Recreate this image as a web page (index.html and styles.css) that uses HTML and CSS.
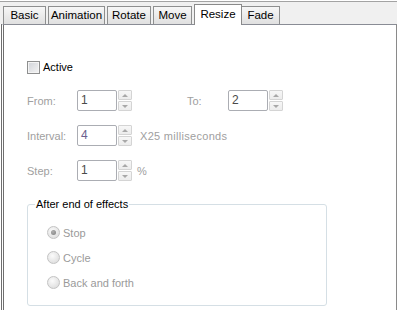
FILE: index.html
```html
<!DOCTYPE html>
<html>
<head>
<meta charset="utf-8">
<link rel="stylesheet" href="styles.css">
</head>
<body>
<div class="window">
  <div class="tabstrip">
    <div class="tab tab-basic">Basic</div>
    <div class="tab tab-animation">Animation</div>
    <div class="tab tab-rotate">Rotate</div>
    <div class="tab tab-move">Move</div>
    <div class="tab tab-resize active">Resize</div>
    <div class="tab tab-fade">Fade</div>
  </div>
  <div class="panel">
    <div class="check-row">
      <span class="checkbox"></span>
      <span class="check-label">Active</span>
    </div>

    <div class="field-row">
      <span class="lbl">From:</span>
      <div class="spin">
        <span class="spin-input">1</span>
        <span class="spin-btns"><span class="spin-btn up"></span><span class="spin-btn down"></span></span>
      </div>
      <span class="lbl lbl-to">To:</span>
      <div class="spin">
        <span class="spin-input">2</span>
        <span class="spin-btns"><span class="spin-btn up"></span><span class="spin-btn down"></span></span>
      </div>
    </div>

    <div class="field-row">
      <span class="lbl">Interval:</span>
      <div class="spin">
        <span class="spin-input val-purple">4</span>
        <span class="spin-btns"><span class="spin-btn up"></span><span class="spin-btn down"></span></span>
      </div>
      <span class="unit unit-ms">X25 milliseconds</span>
    </div>

    <div class="field-row">
      <span class="lbl">Step:</span>
      <div class="spin">
        <span class="spin-input">1</span>
        <span class="spin-btns"><span class="spin-btn up"></span><span class="spin-btn down"></span></span>
      </div>
      <span class="unit unit-pct">%</span>
    </div>

    <fieldset class="group">
      <legend>After end of effects</legend>
      <div class="radio-row"><span class="radio checked"></span><span>Stop</span></div>
      <div class="radio-row"><span class="radio"></span><span>Cycle</span></div>
      <div class="radio-row"><span class="radio"></span><span>Back and forth</span></div>
    </fieldset>
  </div>
</div>
</body>
</html>
```

FILE: styles.css
```css
html, body {
  margin: 0;
  padding: 0;
  background: #ffffff;
}

body {
  font-family: "Liberation Sans", Arial, sans-serif;
  font-size: 11px;
  color: #000;
  width: 397px;
  height: 310px;
  overflow: hidden;
}

.window {
  display: flex;
  flex-direction: column;
  height: 310px;
}

.tabstrip {
  height: 22px;
  border-top: 1px solid #a3a3a3;
  margin-top: 1px;
  background: #f0f0f0;
  display: flex;
  align-items: flex-end;
  padding-left: 3px;
  gap: 2px;
}

.tab {
  box-sizing: border-box;
  height: 18px;
  border: 1px solid #8e8f8f;
  border-bottom: none;
  background: linear-gradient(#f7f7f7, #ebebeb 50%, #e0e0e0);
  text-align: center;
  line-height: 17px;
  font-size: 11.5px;
  color: #000;
}

.tab-basic { width: 43px; }
.tab-animation { width: 57px; }
.tab-rotate { width: 44px; }
.tab-move { width: 39px; }
.tab-resize { width: 48px; }
.tab-fade { width: 39px; margin-left: -3px; }

.tab.active {
  height: 21px;
  margin-bottom: -1px;
  background: #ffffff;
  position: relative;
  z-index: 2;
  line-height: 18px;
  border-color: #8a8a8a;
}

.panel {
  flex: 1;
  margin-left: 1px;
  border-top: 1px solid #898c95;
  border-left: 3px double #6f6f6f;
  border-right: 1px solid #8a8a8a;
  background: #fff;
  padding: 36px 0 0 23px;
  position: relative;
  z-index: 1;
}

.check-row {
  display: flex;
  align-items: center;
  height: 13px;
  gap: 3px;
}

.checkbox {
  box-sizing: border-box;
  width: 13px;
  height: 13px;
  border: 1px solid #8e8f8f;
  background: linear-gradient(135deg, #d0d3d8, #f4f4f4);
  box-shadow: inset 0 0 0 1px #f4f4f4;
}

.check-label {
  line-height: 13px;
}

.field-row {
  display: flex;
  align-items: center;
  height: 21px;
  margin-top: 14px;
  color: #a0a0a0;
}

.check-row + .field-row {
  margin-top: 16px;
}

.lbl {
  width: 50px;
}

.lbl-to {
  width: 41px;
  margin-left: 55px;
}

.spin {
  display: flex;
  align-items: center;
}

.spin-input {
  box-sizing: border-box;
  width: 40px;
  height: 21px;
  border: 1px solid #abadb3;
  border-radius: 2px;
  padding-left: 3px;
  line-height: 19px;
  color: #4a4a4a;
  background: #fff;
  font-size: 12px;
}

.val-purple {
  color: #6b5f8e;
}

.spin-btns {
  display: flex;
  flex-direction: column;
  margin-left: 1px;
  gap: 1px;
}

.spin-btn {
  box-sizing: border-box;
  width: 14px;
  height: 10px;
  border: 1px solid #d4d4d4;
  border-radius: 1px;
  background: linear-gradient(#f7f7f7, #ececec);
  display: flex;
  align-items: center;
  justify-content: center;
}

.spin-btn::after {
  content: "";
  width: 0;
  height: 0;
  border-left: 3px solid transparent;
  border-right: 3px solid transparent;
}

.spin-btn.up::after {
  border-bottom: 3px solid #a8a8a8;
}

.spin-btn.down::after {
  border-top: 3px solid #a8a8a8;
}

.unit-ms {
  margin-left: 8px;
  letter-spacing: 0.3px;
}

.unit-pct {
  margin-left: 5px;
}

.group {
  box-sizing: border-box;
  width: 300px;
  margin: 17px 0 0 0;
  padding: 15px 0 0 7px;
  height: 108px;
  border: 1px solid #d5dfe5;
  border-radius: 3px;
  min-width: 0;
}

.group legend {
  padding: 0 1px;
  color: #000;
  line-height: 13px;
}

.radio-row {
  display: flex;
  align-items: center;
  height: 13px;
  margin: 0 0 12px 12px;
  gap: 3px;
  color: #9a9a9a;
}

.radio {
  box-sizing: border-box;
  width: 13px;
  height: 13px;
  border-radius: 50%;
  border: 1px solid #c3c3c3;
  background: radial-gradient(circle at 40% 35%, #fbfbfb, #e2e2e2 70%, #d6d6d6);
  display: flex;
  align-items: center;
  justify-content: center;
}

.radio.checked::after {
  content: "";
  width: 5px;
  height: 5px;
  border-radius: 50%;
  background: radial-gradient(circle at 40% 35%, #b0b0b0, #7d7d7d);
}
```
